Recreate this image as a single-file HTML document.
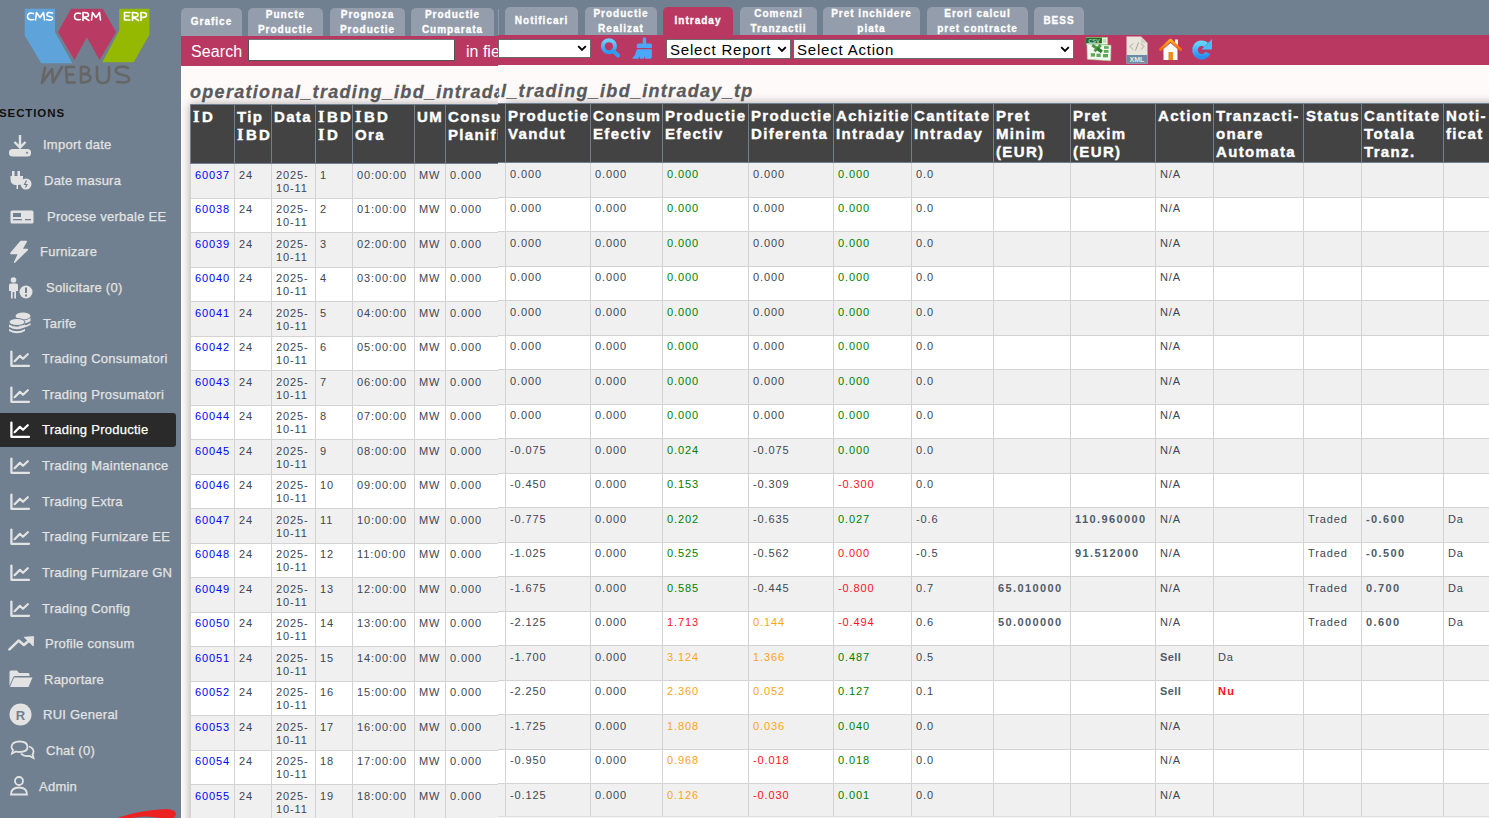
<!DOCTYPE html><html><head><meta charset="utf-8"><style>
*{box-sizing:border-box}
html,body{margin:0;padding:0}
body{width:1489px;height:818px;overflow:hidden;position:relative;background:#708090;font-family:"Liberation Sans",sans-serif}
.a{position:absolute}
.tab{position:absolute;top:7px;height:29px;background:#939dab;border-radius:5px 5px 0 0;color:#fff;font-weight:bold;font-size:10px;line-height:15px;text-align:center;display:flex;align-items:center;justify-content:center;letter-spacing:1px;padding-bottom:1px;-webkit-text-stroke:0.3px #fff}
.tab.act{background:#b93862}
.mi{position:absolute;left:0;width:176px;height:34px;color:#e3e3e3;font-size:13px;letter-spacing:0.55px}
.mi .t{position:absolute;top:0;line-height:34px;white-space:nowrap}
.mi svg{position:absolute}
.cell{position:absolute;font-size:11px;line-height:13px;color:#404652;letter-spacing:0.9px;white-space:nowrap}
.hd{position:absolute;font-size:15px;line-height:18.2px;color:#fff;font-weight:bold;white-space:nowrap;-webkit-text-stroke:0.4px #fff}
</style></head><body>
<div class="a" style="left:181px;top:64px;width:1308px;height:754px;background:#fffafa"></div>
<div class="tab" style="left:181px;width:61px;top:8px;height:28px">Grafice</div>
<div class="tab" style="left:248px;width:75px;top:8px;height:28px">Puncte<br>Productie</div>
<div class="tab" style="left:330px;width:75px;top:8px;height:28px">Prognoza<br>Productie</div>
<div class="tab" style="left:411px;width:83px;top:8px;height:28px">Productie<br>Cumparata</div>
<div class="tab" style="left:505px;width:73px;top:7px;height:28px">Notificari</div>
<div class="tab" style="left:585px;width:72px;top:7px;height:28px">Productie<br>Realizat</div>
<div class="tab act" style="left:663px;width:70px;top:7px;height:28px">Intraday</div>
<div class="tab" style="left:740px;width:77px;top:7px;height:28px">Comenzi<br>Tranzactii</div>
<div class="tab" style="left:823px;width:97px;top:7px;height:28px">Pret inchidere<br>piata</div>
<div class="tab" style="left:927px;width:101px;top:7px;height:28px">Erori calcul<br>pret contracte</div>
<div class="tab" style="left:1034px;width:50px;top:7px;height:28px">BESS</div>
<div class="a" style="left:498px;top:9px;width:1px;height:26px;background:#8e99a6"></div>
<div class="a" style="left:181px;top:36px;width:317px;height:30px;background:#b93862"></div>
<div class="a" style="left:498px;top:35px;width:991px;height:30px;background:#b93862"></div>
<div class="a" style="left:191px;top:43px;color:#fff;font-size:16px;letter-spacing:0.1px">Search</div>
<div class="a" style="left:248px;top:39px;width:207px;height:22px;background:#fff;border:1px solid #555;border-top-color:#777"></div>
<div class="a" style="left:466px;top:43px;color:#fff;font-size:16px;width:32px;overflow:hidden;white-space:nowrap">in fields</div>
<div class="a" style="left:498px;top:39px;width:93px;height:19px;background:#fff;border:1px solid #6a6a6a;overflow:hidden"><svg class="a" style="right:3px;top:5px" width="10" height="7" viewBox="0 0 10 7"><path d="M1.2 1.2 L5 5 L8.8 1.2" fill="none" stroke="#000" stroke-width="1.9"/></svg></div>
<div class="a" style="left:666px;top:39px;width:125px;height:20px;background:#fff;border:1px solid #6a6a6a;overflow:hidden"><div class="a" style="left:3px;top:0.5px;line-height:18px;font-size:15px;letter-spacing:0.8px;color:#000;white-space:nowrap">Select Report</div><svg class="a" style="right:3px;top:6px" width="10" height="7" viewBox="0 0 10 7"><path d="M1.2 1.2 L5 5 L8.8 1.2" fill="none" stroke="#000" stroke-width="1.9"/></svg></div>
<div class="a" style="left:793px;top:39px;width:281px;height:20px;background:#fff;border:1px solid #6a6a6a;overflow:hidden"><div class="a" style="left:3px;top:0.5px;line-height:18px;font-size:15px;letter-spacing:0.8px;color:#000;white-space:nowrap">Select Action</div><svg class="a" style="right:3px;top:6px" width="10" height="7" viewBox="0 0 10 7"><path d="M1.2 1.2 L5 5 L8.8 1.2" fill="none" stroke="#000" stroke-width="1.9"/></svg></div>
<svg class="a" style="left:0;top:0" width="180" height="100" viewBox="0 0 180 100">
<polygon points="24.7,8.8 55,8.8 55,32 72.3,63.3 41.2,63.3 24.7,35.5" fill="#5ea3d9"/>
<polygon points="71.1,8.8 102.7,8.8 116.1,32 99.5,60.1 86.8,37.3 74.4,60.1 58,32" fill="#b93a63"/>
<polygon points="119.2,8.8 149.4,8.8 149.4,34.8 133.7,62.3 102.3,62.3 119.2,30.6" fill="#95b800"/>
<g fill="none" stroke="#fff" stroke-width="1.6" stroke-linecap="round" stroke-linejoin="round">
<path d="M33.5 13.5 Q27.5 12 27.5 16.5 Q27.5 20.5 33.5 19.5"/>
<path d="M35.5 20 L36.5 12.5 L40 17.5 L43.5 12.5 L44.5 20"/>
<path d="M52.5 13 Q47 11.5 47 14.5 Q47 16.5 50 16.5 Q53 17 52.5 19 Q51.5 21 46.5 19.5"/>
<path d="M80.5 13.5 Q74.5 12 74.5 16.5 Q74.5 20.5 80.5 19.5"/>
<path d="M83 20.5 L83 12.5 Q89 12 88.5 15.5 Q88 17 83.5 17 L89 20.5"/>
<path d="M91.5 20 L92.5 12.5 L96 17.5 L99.5 12.5 L100.5 20"/>
<path d="M130 12.5 L124.5 12.5 L124.5 20 L130 20 M124.5 16 L129 16"/>
<path d="M132.5 20.5 L132.5 12.5 Q138.5 12 138 15.5 Q137.5 17 133 17 L138.5 20.5"/>
<path d="M141 20.5 L141 12.5 Q147 12 146.5 15.5 Q146 17.5 141.5 17.5"/>
</g>
<g fill="none" stroke="#666666" stroke-width="2.6" stroke-linecap="round" stroke-linejoin="round">
<path d="M42 83 L45 67.5 M42 83 L52 69 L53 82.5 L62 67"/>
<path d="M74 67 L66 67 L67 82.5 L75 82.5 M66.5 74.5 L73 74.5"/>
<path d="M81 67 L81 82.5 M81 67 Q89 66 89 70.5 Q89 74 82 74 Q91 74 90.5 78.5 Q90 82.5 81 82.5"/>
<path d="M97 67 L97 77 Q97 83 103 83 Q109 83 109 77 L109 67"/>
<path d="M128 68 Q124 66 119 67 Q115 68.5 116 71.5 Q117 74 123 75 Q130 76.5 129 80 Q128 83.5 117 82"/>
</g>
</svg>
<div class="a" style="left:-1px;top:107px;font-size:11.5px;font-weight:bold;color:#111;letter-spacing:0.9px">SECTIONS</div>
<div class="a" style="left:0;top:144px;width:0;height:0"><svg class="a" style="left:8px;top:-10px" width="24" height="24" viewBox="0 0 24 24"><path d="M12 1 L12 13 M6.5 8 L12 13.5 L17.5 8" fill="none" stroke="#e3e3e3" stroke-width="2.4"/><rect x="1" y="15" width="22" height="7.5" rx="3.5" fill="#e3e3e3"/><circle cx="19" cy="18.7" r="1" fill="#708090"/></svg></div>
<div class="a" style="left:43px;top:137px;font-size:13px;line-height:16px;color:#e3e3e3;letter-spacing:0.25px;white-space:nowrap;-webkit-text-stroke:0.25px #e3e3e3">Import date</div>
<div class="a" style="left:0;top:180px;width:0;height:0"><svg class="a" style="left:10px;top:-9px" width="22" height="20" viewBox="0 0 22 20"><rect x="2" y="0" width="2.5" height="5" fill="#e3e3e3"/><rect x="7.5" y="0" width="2.5" height="5" fill="#e3e3e3"/><path d="M0.5 5 H13 V8 Q13 14 8 14 V18 H6.5 V14 Q0.5 14 0.5 8 Z" fill="#e3e3e3"/><circle cx="16" cy="13" r="5.5" fill="#e3e3e3"/><path d="M16.5 9.5 L14.5 13.5 H17 L15.5 16.5" fill="none" stroke="#708090" stroke-width="1.2"/></svg></div>
<div class="a" style="left:44px;top:173px;font-size:13px;line-height:16px;color:#e3e3e3;letter-spacing:0.25px;white-space:nowrap;-webkit-text-stroke:0.25px #e3e3e3">Date masura</div>
<div class="a" style="left:0;top:216px;width:0;height:0"><svg class="a" style="left:10px;top:-6px" width="24" height="14" viewBox="0 0 24 14"><rect x="0.5" y="0.5" width="23" height="13" rx="1.5" fill="#e3e3e3"/><rect x="3" y="3" width="8" height="4" fill="#708090"/><rect x="3" y="9" width="9" height="1.3" fill="#708090"/><rect x="15" y="9" width="6" height="1.3" fill="#708090"/></svg></div>
<div class="a" style="left:47px;top:209px;font-size:13px;line-height:16px;color:#e3e3e3;letter-spacing:0.25px;white-space:nowrap;-webkit-text-stroke:0.25px #e3e3e3">Procese verbale EE</div>
<div class="a" style="left:0;top:251px;width:0;height:0"><svg class="a" style="left:9px;top:-11px" width="20" height="24" viewBox="0 0 20 24"><path d="M11.5 0.8 L17.5 0.8 Q18.3 1 17.8 2 L14 8.8 L18.3 8.8 Q19.6 9.2 18.6 10.4 L6 22.8 Q4.6 23.6 5 22 L8.6 14.2 L2 14.2 Q0.6 13.8 1.5 12.6 Z" fill="#e3e3e3"/></svg></div>
<div class="a" style="left:40px;top:244px;font-size:13px;line-height:16px;color:#e3e3e3;letter-spacing:0.25px;white-space:nowrap;-webkit-text-stroke:0.25px #e3e3e3">Furnizare</div>
<div class="a" style="left:0;top:287px;width:0;height:0"><svg class="a" style="left:8px;top:-10px" width="26" height="22" viewBox="0 0 26 22"><circle cx="5.5" cy="3" r="2.8" fill="#e3e3e3"/><path d="M1 8 Q1 6.5 3 6.5 H8 Q10 6.5 10 8 V14 H8 V21.5 H6.3 V15 H4.7 V21.5 H3 V14 H1 Z" fill="#e3e3e3"/><circle cx="18" cy="15" r="6.5" fill="#e3e3e3"/><rect x="17" y="10.5" width="2" height="5.5" fill="#708090"/><rect x="17" y="17.5" width="2" height="2" fill="#708090"/></svg></div>
<div class="a" style="left:46px;top:280px;font-size:13px;line-height:16px;color:#e3e3e3;letter-spacing:0.25px;white-space:nowrap;-webkit-text-stroke:0.25px #e3e3e3">Solicitare (0)</div>
<div class="a" style="left:0;top:323px;width:0;height:0"><svg class="a" style="left:8px;top:-11px" width="24" height="23" viewBox="0 0 24 23"><ellipse cx="15" cy="4" rx="7.5" ry="3.5" fill="#e3e3e3"/><path d="M7.5 6 Q15 11 22.5 6 V9 Q15 14 7.5 9Z M7.5 11 Q15 16 22.5 11 V13 Q15 17 12 15Z" fill="#e3e3e3"/><ellipse cx="9" cy="10" rx="8" ry="3.5" fill="#e3e3e3" stroke="#708090" stroke-width="1"/><path d="M1 12.5 Q9 17 17 12.5 V15 Q9 19.5 1 15Z M1 17 Q9 21.5 17 17 V19 Q9 23.5 1 19Z" fill="#e3e3e3"/></svg></div>
<div class="a" style="left:43px;top:316px;font-size:13px;line-height:16px;color:#e3e3e3;letter-spacing:0.25px;white-space:nowrap;-webkit-text-stroke:0.25px #e3e3e3">Tarife</div>
<div class="a" style="left:0;top:358px;width:0;height:0"><svg class="a" style="left:10px;top:-8px" width="21" height="18" viewBox="0 0 21 18"><path d="M1.4 1.6 V15.8 H19" fill="none" stroke="#e3e3e3" stroke-width="2.3" stroke-linecap="round" stroke-linejoin="round"/><path d="M4.6 11.2 L9.9 5.9 L13 8.8 L17.8 4.2" fill="none" stroke="#e3e3e3" stroke-width="2.2" stroke-linecap="round" stroke-linejoin="round"/></svg></div>
<div class="a" style="left:42px;top:351px;font-size:13px;line-height:16px;color:#e3e3e3;letter-spacing:0.25px;white-space:nowrap;-webkit-text-stroke:0.25px #e3e3e3">Trading Consumatori</div>
<div class="a" style="left:0;top:394px;width:0;height:0"><svg class="a" style="left:10px;top:-8px" width="21" height="18" viewBox="0 0 21 18"><path d="M1.4 1.6 V15.8 H19" fill="none" stroke="#e3e3e3" stroke-width="2.3" stroke-linecap="round" stroke-linejoin="round"/><path d="M4.6 11.2 L9.9 5.9 L13 8.8 L17.8 4.2" fill="none" stroke="#e3e3e3" stroke-width="2.2" stroke-linecap="round" stroke-linejoin="round"/></svg></div>
<div class="a" style="left:42px;top:387px;font-size:13px;line-height:16px;color:#e3e3e3;letter-spacing:0.25px;white-space:nowrap;-webkit-text-stroke:0.25px #e3e3e3">Trading Prosumatori</div>
<div class="a" style="left:0;top:413px;width:176px;height:34px;background:#2a2a2a;border-radius:0 3px 3px 0"></div>
<div class="a" style="left:0;top:429px;width:0;height:0"><svg class="a" style="left:10px;top:-8px" width="21" height="18" viewBox="0 0 21 18"><path d="M1.4 1.6 V15.8 H19" fill="none" stroke="#ffffff" stroke-width="2.3" stroke-linecap="round" stroke-linejoin="round"/><path d="M4.6 11.2 L9.9 5.9 L13 8.8 L17.8 4.2" fill="none" stroke="#ffffff" stroke-width="2.2" stroke-linecap="round" stroke-linejoin="round"/></svg></div>
<div class="a" style="left:42px;top:422px;font-size:13px;line-height:16px;color:#ffffff;letter-spacing:0.25px;white-space:nowrap;-webkit-text-stroke:0.25px #ffffff">Trading Productie</div>
<div class="a" style="left:0;top:465px;width:0;height:0"><svg class="a" style="left:10px;top:-8px" width="21" height="18" viewBox="0 0 21 18"><path d="M1.4 1.6 V15.8 H19" fill="none" stroke="#e3e3e3" stroke-width="2.3" stroke-linecap="round" stroke-linejoin="round"/><path d="M4.6 11.2 L9.9 5.9 L13 8.8 L17.8 4.2" fill="none" stroke="#e3e3e3" stroke-width="2.2" stroke-linecap="round" stroke-linejoin="round"/></svg></div>
<div class="a" style="left:42px;top:458px;font-size:13px;line-height:16px;color:#e3e3e3;letter-spacing:0.25px;white-space:nowrap;-webkit-text-stroke:0.25px #e3e3e3">Trading Maintenance</div>
<div class="a" style="left:0;top:501px;width:0;height:0"><svg class="a" style="left:10px;top:-8px" width="21" height="18" viewBox="0 0 21 18"><path d="M1.4 1.6 V15.8 H19" fill="none" stroke="#e3e3e3" stroke-width="2.3" stroke-linecap="round" stroke-linejoin="round"/><path d="M4.6 11.2 L9.9 5.9 L13 8.8 L17.8 4.2" fill="none" stroke="#e3e3e3" stroke-width="2.2" stroke-linecap="round" stroke-linejoin="round"/></svg></div>
<div class="a" style="left:42px;top:494px;font-size:13px;line-height:16px;color:#e3e3e3;letter-spacing:0.25px;white-space:nowrap;-webkit-text-stroke:0.25px #e3e3e3">Trading Extra</div>
<div class="a" style="left:0;top:536px;width:0;height:0"><svg class="a" style="left:10px;top:-8px" width="21" height="18" viewBox="0 0 21 18"><path d="M1.4 1.6 V15.8 H19" fill="none" stroke="#e3e3e3" stroke-width="2.3" stroke-linecap="round" stroke-linejoin="round"/><path d="M4.6 11.2 L9.9 5.9 L13 8.8 L17.8 4.2" fill="none" stroke="#e3e3e3" stroke-width="2.2" stroke-linecap="round" stroke-linejoin="round"/></svg></div>
<div class="a" style="left:42px;top:529px;font-size:13px;line-height:16px;color:#e3e3e3;letter-spacing:0.25px;white-space:nowrap;-webkit-text-stroke:0.25px #e3e3e3">Trading Furnizare EE</div>
<div class="a" style="left:0;top:572px;width:0;height:0"><svg class="a" style="left:10px;top:-8px" width="21" height="18" viewBox="0 0 21 18"><path d="M1.4 1.6 V15.8 H19" fill="none" stroke="#e3e3e3" stroke-width="2.3" stroke-linecap="round" stroke-linejoin="round"/><path d="M4.6 11.2 L9.9 5.9 L13 8.8 L17.8 4.2" fill="none" stroke="#e3e3e3" stroke-width="2.2" stroke-linecap="round" stroke-linejoin="round"/></svg></div>
<div class="a" style="left:42px;top:565px;font-size:13px;line-height:16px;color:#e3e3e3;letter-spacing:0.25px;white-space:nowrap;-webkit-text-stroke:0.25px #e3e3e3">Trading Furnizare GN</div>
<div class="a" style="left:0;top:608px;width:0;height:0"><svg class="a" style="left:10px;top:-8px" width="21" height="18" viewBox="0 0 21 18"><path d="M1.4 1.6 V15.8 H19" fill="none" stroke="#e3e3e3" stroke-width="2.3" stroke-linecap="round" stroke-linejoin="round"/><path d="M4.6 11.2 L9.9 5.9 L13 8.8 L17.8 4.2" fill="none" stroke="#e3e3e3" stroke-width="2.2" stroke-linecap="round" stroke-linejoin="round"/></svg></div>
<div class="a" style="left:42px;top:601px;font-size:13px;line-height:16px;color:#e3e3e3;letter-spacing:0.25px;white-space:nowrap;-webkit-text-stroke:0.25px #e3e3e3">Trading Config</div>
<div class="a" style="left:0;top:643px;width:0;height:0"><svg class="a" style="left:8px;top:-7px" width="27" height="16" viewBox="0 0 27 16"><path d="M1.5 13.4 L10.6 4.6 L15.9 9 L22.5 3.2" fill="none" stroke="#e3e3e3" stroke-width="2.6" stroke-linecap="round" stroke-linejoin="round"/><path d="M16.2 1.2 L25.7 0.6 L25.3 10 Z" fill="#e3e3e3" stroke="#e3e3e3" stroke-width="0.8" stroke-linejoin="round"/></svg></div>
<div class="a" style="left:45px;top:636px;font-size:13px;line-height:16px;color:#e3e3e3;letter-spacing:0.25px;white-space:nowrap;-webkit-text-stroke:0.25px #e3e3e3">Profile consum</div>
<div class="a" style="left:0;top:679px;width:0;height:0"><svg class="a" style="left:9px;top:-9px" width="24" height="18" viewBox="0 0 24 18"><path d="M0.5 2 Q0.5 0.5 2 0.5 H8 L10 3 H19 Q20.5 3 20.5 4.5 V6 H6 Q4.5 6 4 7.5 L0.5 16Z" fill="#e3e3e3"/><path d="M5 7.5 H23.5 L19.5 17 H1Z" fill="#e3e3e3"/></svg></div>
<div class="a" style="left:44px;top:672px;font-size:13px;line-height:16px;color:#e3e3e3;letter-spacing:0.25px;white-space:nowrap;-webkit-text-stroke:0.25px #e3e3e3">Raportare</div>
<div class="a" style="left:0;top:714px;width:0;height:0"><svg class="a" style="left:9px;top:-11px" width="23" height="23" viewBox="0 0 23 23"><circle cx="11.5" cy="11.5" r="11" fill="#e3e3e3"/><text x="11.5" y="16.5" font-family="Liberation Sans" font-weight="bold" font-size="13" text-anchor="middle" fill="#708090">R</text></svg></div>
<div class="a" style="left:43px;top:707px;font-size:13px;line-height:16px;color:#e3e3e3;letter-spacing:0.25px;white-space:nowrap;-webkit-text-stroke:0.25px #e3e3e3">RUI General</div>
<div class="a" style="left:0;top:750px;width:0;height:0"><svg class="a" style="left:10px;top:-10px" width="25" height="21" viewBox="0 0 25 21"><path d="M9.5 1.5 Q17.5 1.5 17.5 7 Q17.5 12 9.5 12 Q7.5 12 6 11.5 L2 13.5 L3 10 Q1.5 8.5 1.5 7 Q1.5 1.5 9.5 1.5Z" fill="none" stroke="#e3e3e3" stroke-width="1.8"/><path d="M19 6.5 Q23.5 8 23.5 11.5 Q23.5 13.5 22.5 14.5 L23.5 18 L19.5 16 Q14 17 11 13.5" fill="none" stroke="#e3e3e3" stroke-width="1.8"/></svg></div>
<div class="a" style="left:46px;top:743px;font-size:13px;line-height:16px;color:#e3e3e3;letter-spacing:0.25px;white-space:nowrap;-webkit-text-stroke:0.25px #e3e3e3">Chat (0)</div>
<div class="a" style="left:0;top:786px;width:0;height:0"><svg class="a" style="left:10px;top:-10px" width="18" height="20" viewBox="0 0 18 20"><circle cx="9" cy="5" r="4" fill="none" stroke="#e3e3e3" stroke-width="1.8"/><path d="M1 18.5 Q1 11.5 9 11.5 Q17 11.5 17 18.5Z" fill="none" stroke="#e3e3e3" stroke-width="1.8"/></svg></div>
<div class="a" style="left:39px;top:779px;font-size:13px;line-height:16px;color:#e3e3e3;letter-spacing:0.25px;white-space:nowrap;-webkit-text-stroke:0.25px #e3e3e3">Admin</div>
<svg class="a" style="left:0;top:800px" width="181" height="18" viewBox="0 800 181 18"><path d="M117 818 Q140 810 166 809 Q176 809.5 176 814 Q175.5 818 172 818 L160 818 Q145 815 131 818 Z" fill="#ec2222"/></svg>
<svg class="a" style="left:596px;top:33px" width="26" height="28" viewBox="0 0 26 28">
<defs><linearGradient id="gS" x1="0" y1="0" x2="0" y2="1"><stop offset="0" stop-color="#6cd0ff"/><stop offset="1" stop-color="#2a9af0"/></linearGradient></defs>
<circle cx="12.9" cy="13.3" r="6.1" fill="none" stroke="url(#gS)" stroke-width="3.9"/>
<path d="M17.6 18.2 L22 22.6" stroke="#2f9cf0" stroke-width="4.2" stroke-linecap="round"/></svg>
<svg class="a" style="left:631px;top:36px" width="24" height="24" viewBox="0 0 24 24">
<path d="M11.7 8 L11.7 3 Q11.7 1.2 13.4 1.2 Q15.1 1.2 15.1 3 L15.1 8Z" fill="#4aa8fb"/>
<path d="M5.8 12.1 L5.8 9 Q5.8 7.5 7.3 7.5 L19.4 7.5 Q20.9 7.5 20.9 9 L20.9 12.1Z" fill="#4aa8fb"/>
<path d="M6 13.3 L20.9 13.3 L20.9 21 Q20.9 22.8 19 22.8 L14.2 22.8 L13.4 20 L12.7 22.8 L9.2 22.8 L8.4 20.3 L7.4 22.8 L1.1 22.8 Q4.6 19.2 6 13.3Z" fill="#4aa8fb"/></svg>
<svg class="a" style="left:1085px;top:36px" width="28" height="27" viewBox="0 0 28 27">
<rect x="1.3" y="1.4" width="21.4" height="7" fill="#eef7e8" stroke="#8ad274" stroke-width="0.7"/>
<rect x="17.5" y="3" width="3.8" height="3.8" fill="#c8d8c0"/>
<rect x="1.1" y="1.7" width="15.8" height="5.6" fill="#1f6a22"/>
<text x="9" y="6.6" font-family="Liberation Sans" font-size="5.6" font-weight="bold" fill="#b8d0b0" text-anchor="middle">CSV</text>
<polygon points="2,8 26,9.3 25.6,24.8 2.4,23.3" fill="#f3f8ee" stroke="#a8d898" stroke-width="0.6"/>
<path d="M7.2 9 L16.8 15.8 M15.8 9 L9.5 15.2" stroke="#4a9a44" stroke-width="3"/>
<path d="M12 12.2 L16.8 15.8" stroke="#2e7a2e" stroke-width="3"/>
<g fill="#5fa85a"><rect x="19" y="10.2" width="4.7" height="2.6"/><rect x="18.8" y="14" width="4.7" height="2.8"/><rect x="5.8" y="17.2" width="4.2" height="3.4"/><rect x="11.5" y="17.6" width="4.2" height="3.4"/><rect x="18" y="18" width="5" height="3.4"/></g></svg>
<svg class="a" style="left:1126px;top:36px" width="22" height="28" viewBox="0 0 22 28">
<path d="M0.5 0.5 L15 0.5 L21.5 7 L21.5 27.5 L0.5 27.5Z" fill="#e8e6dc"/>
<path d="M15 0.5 L15 7 L21.5 7Z" fill="#d5d2c6"/>
<rect x="0.5" y="19" width="21" height="8.5" fill="#6a8ca8"/>
<text x="11" y="26" font-family="Liberation Sans" font-size="7" font-weight="bold" fill="#f0e6d8" text-anchor="middle">XML</text>
<path d="M7 7.5 L4 10.5 L7 13.5 M15 7.5 L18 10.5 L15 13.5 M12.5 6.5 L9.5 14.5" fill="none" stroke="#a89a88" stroke-width="0.9"/></svg>
<svg class="a" style="left:1159px;top:38px" width="23" height="23" viewBox="0 0 23 23">
<defs><linearGradient id="gH" x1="0" y1="0" x2="0" y2="1"><stop offset="0" stop-color="#ffb020"/><stop offset="1" stop-color="#f06a10"/></linearGradient></defs>
<rect x="16" y="1.5" width="3" height="7" fill="#f4f4f4"/>
<path d="M4.5 11 L11.5 5 L18.5 11 L18.5 22 L4.5 22Z" fill="#fbfbfb"/>
<path d="M1.5 11.5 L11.5 2 L21.5 11.5" fill="none" stroke="url(#gH)" stroke-width="3" stroke-linejoin="round" stroke-linecap="round"/>
<rect x="9.5" y="14" width="4.5" height="8" fill="#f7891e"/></svg>
<svg class="a" style="left:1191px;top:38px" width="22" height="23" viewBox="0 0 22 23">
<defs><linearGradient id="gR" x1="0" y1="0" x2="0" y2="1"><stop offset="0" stop-color="#62d4ff"/><stop offset="1" stop-color="#2a8ef0"/></linearGradient></defs>
<path d="M16.9 14.9 A6.8 6.8 0 1 1 15.1 6.8" fill="none" stroke="url(#gR)" stroke-width="5.6"/>
<path d="M10.5 11.6 L21 1 L21 11.6Z" fill="#45bdfa"/></svg>
<div class="a" style="left:181px;top:66px;width:317px;height:38px;overflow:hidden"><div class="a" id="titL" style="left:9px;top:15px;font-size:18px;line-height:22px;font-weight:bold;font-style:italic;color:#5b5b5b;letter-spacing:1.3px;white-space:nowrap;-webkit-text-stroke:0.3px #5b5b5b">operational_trading_ibd_intraday_tp</div></div>
<div class="a" style="left:498px;top:65px;width:400px;height:38px;overflow:hidden"><div class="a" id="titR" style="left:-102px;top:15px;font-size:18px;line-height:22px;font-weight:bold;font-style:italic;color:#5b5b5b;letter-spacing:1.3px;white-space:nowrap;-webkit-text-stroke:0.3px #5b5b5b">operational_trading_ibd_intraday_tp</div></div>
<div class="a" style="left:181px;top:88px;width:317px;height:730px;overflow:hidden"><div class="a" style="left:9px;top:16px;width:1689px;height:900px;box-shadow:0 0 9px rgba(0,0,0,0.32)"></div><div class="a" style="left:9px;top:16px;width:1689px;height:60px;background:#434343;border-top:1px solid #708090;border-bottom:1px solid #708090"></div><div class="a" style="left:9px;top:76px;width:1689px;height:34px;background:#f0f0f0"></div><div class="a" style="left:9px;top:110px;width:1689px;height:1px;background:#d3d3d3"></div><div class="a" style="left:9px;top:111px;width:1689px;height:33px;background:#ffffff"></div><div class="a" style="left:9px;top:144px;width:1689px;height:1px;background:#d3d3d3"></div><div class="a" style="left:9px;top:145px;width:1689px;height:34px;background:#f0f0f0"></div><div class="a" style="left:9px;top:179px;width:1689px;height:1px;background:#d3d3d3"></div><div class="a" style="left:9px;top:180px;width:1689px;height:33px;background:#ffffff"></div><div class="a" style="left:9px;top:213px;width:1689px;height:1px;background:#d3d3d3"></div><div class="a" style="left:9px;top:214px;width:1689px;height:34px;background:#f0f0f0"></div><div class="a" style="left:9px;top:248px;width:1689px;height:1px;background:#d3d3d3"></div><div class="a" style="left:9px;top:249px;width:1689px;height:33px;background:#ffffff"></div><div class="a" style="left:9px;top:282px;width:1689px;height:1px;background:#d3d3d3"></div><div class="a" style="left:9px;top:283px;width:1689px;height:34px;background:#f0f0f0"></div><div class="a" style="left:9px;top:317px;width:1689px;height:1px;background:#d3d3d3"></div><div class="a" style="left:9px;top:318px;width:1689px;height:33px;background:#ffffff"></div><div class="a" style="left:9px;top:351px;width:1689px;height:1px;background:#d3d3d3"></div><div class="a" style="left:9px;top:352px;width:1689px;height:34px;background:#f0f0f0"></div><div class="a" style="left:9px;top:386px;width:1689px;height:1px;background:#d3d3d3"></div><div class="a" style="left:9px;top:387px;width:1689px;height:33px;background:#ffffff"></div><div class="a" style="left:9px;top:420px;width:1689px;height:1px;background:#d3d3d3"></div><div class="a" style="left:9px;top:421px;width:1689px;height:34px;background:#f0f0f0"></div><div class="a" style="left:9px;top:455px;width:1689px;height:1px;background:#d3d3d3"></div><div class="a" style="left:9px;top:456px;width:1689px;height:33px;background:#ffffff"></div><div class="a" style="left:9px;top:489px;width:1689px;height:1px;background:#d3d3d3"></div><div class="a" style="left:9px;top:490px;width:1689px;height:34px;background:#f0f0f0"></div><div class="a" style="left:9px;top:524px;width:1689px;height:1px;background:#d3d3d3"></div><div class="a" style="left:9px;top:525px;width:1689px;height:33px;background:#ffffff"></div><div class="a" style="left:9px;top:558px;width:1689px;height:1px;background:#d3d3d3"></div><div class="a" style="left:9px;top:559px;width:1689px;height:34px;background:#f0f0f0"></div><div class="a" style="left:9px;top:593px;width:1689px;height:1px;background:#d3d3d3"></div><div class="a" style="left:9px;top:594px;width:1689px;height:33px;background:#ffffff"></div><div class="a" style="left:9px;top:627px;width:1689px;height:1px;background:#d3d3d3"></div><div class="a" style="left:9px;top:628px;width:1689px;height:34px;background:#f0f0f0"></div><div class="a" style="left:9px;top:662px;width:1689px;height:1px;background:#d3d3d3"></div><div class="a" style="left:9px;top:663px;width:1689px;height:33px;background:#ffffff"></div><div class="a" style="left:9px;top:696px;width:1689px;height:1px;background:#d3d3d3"></div><div class="a" style="left:9px;top:697px;width:1689px;height:34px;background:#f0f0f0"></div><div class="a" style="left:9px;top:731px;width:1689px;height:1px;background:#d3d3d3"></div><div class="a" style="left:9px;top:16px;width:1px;height:60px;background:#708090"></div><div class="a" style="left:9px;top:76px;width:1px;height:818px;background:#d3d3d3"></div><div class="a" style="left:53px;top:16px;width:1px;height:60px;background:#708090"></div><div class="a" style="left:53px;top:76px;width:1px;height:818px;background:#d3d3d3"></div><div class="a" style="left:90px;top:16px;width:1px;height:60px;background:#708090"></div><div class="a" style="left:90px;top:76px;width:1px;height:818px;background:#d3d3d3"></div><div class="a" style="left:134px;top:16px;width:1px;height:60px;background:#708090"></div><div class="a" style="left:134px;top:76px;width:1px;height:818px;background:#d3d3d3"></div><div class="a" style="left:171px;top:16px;width:1px;height:60px;background:#708090"></div><div class="a" style="left:171px;top:76px;width:1px;height:818px;background:#d3d3d3"></div><div class="a" style="left:233px;top:16px;width:1px;height:60px;background:#708090"></div><div class="a" style="left:233px;top:76px;width:1px;height:818px;background:#d3d3d3"></div><div class="a" style="left:264px;top:16px;width:1px;height:60px;background:#708090"></div><div class="a" style="left:264px;top:76px;width:1px;height:818px;background:#d3d3d3"></div><div class="a" style="left:379px;top:16px;width:1px;height:60px;background:#708090"></div><div class="a" style="left:379px;top:76px;width:1px;height:818px;background:#d3d3d3"></div><div class="hd" style="left:12px;top:19.6px;font-family:'Liberation Sans',sans-serif;letter-spacing:1.35px;font-size:15px"><span style="font-family:'Liberation Serif',serif;font-size:16.5px;letter-spacing:2.6px">I</span>D</div><div class="hd" style="left:56px;top:19.6px;font-family:'Liberation Sans',sans-serif;letter-spacing:1.35px;font-size:15px">Tip<br><span style="font-family:'Liberation Serif',serif;font-size:16.5px;letter-spacing:2.6px">I</span><span style="letter-spacing:2.2px">B</span>D</div><div class="hd" style="left:93px;top:19.6px;font-family:'Liberation Sans',sans-serif;letter-spacing:1.35px;font-size:15px">Data</div><div class="hd" style="left:137px;top:19.6px;font-family:'Liberation Sans',sans-serif;letter-spacing:1.35px;font-size:15px"><span style="font-family:'Liberation Serif',serif;font-size:16.5px;letter-spacing:2.6px">I</span><span style="letter-spacing:2.2px">B</span>D<br><span style="font-family:'Liberation Serif',serif;font-size:16.5px;letter-spacing:2.6px">I</span>D</div><div class="hd" style="left:174px;top:19.6px;font-family:'Liberation Sans',sans-serif;letter-spacing:1.35px;font-size:15px"><span style="font-family:'Liberation Serif',serif;font-size:16.5px;letter-spacing:2.6px">I</span><span style="letter-spacing:2.2px">B</span>D<br>Ora</div><div class="hd" style="left:236px;top:19.6px;font-family:'Liberation Sans',sans-serif;letter-spacing:1.35px;font-size:15px">UM</div><div class="hd" style="left:267px;top:19.6px;font-family:'Liberation Sans',sans-serif;letter-spacing:1.35px;font-size:15px">Consum<br>Planificat</div><div class="cell" style="left:14px;top:81.0px;color:#0000ff;">60037</div><div class="cell" style="left:58px;top:81.0px;color:#404652;">24</div><div class="cell" style="left:95px;top:81.0px;color:#404652;">2025-<br>10-11</div><div class="cell" style="left:139px;top:81.0px;color:#404652;">1</div><div class="cell" style="left:176px;top:81.0px;color:#404652;">00:00:00</div><div class="cell" style="left:238px;top:81.0px;color:#404652;">MW</div><div class="cell" style="left:269px;top:81.0px;color:#404652;">0.000</div><div class="cell" style="left:14px;top:115.0px;color:#0000ff;">60038</div><div class="cell" style="left:58px;top:115.0px;color:#404652;">24</div><div class="cell" style="left:95px;top:115.0px;color:#404652;">2025-<br>10-11</div><div class="cell" style="left:139px;top:115.0px;color:#404652;">2</div><div class="cell" style="left:176px;top:115.0px;color:#404652;">01:00:00</div><div class="cell" style="left:238px;top:115.0px;color:#404652;">MW</div><div class="cell" style="left:269px;top:115.0px;color:#404652;">0.000</div><div class="cell" style="left:14px;top:150.0px;color:#0000ff;">60039</div><div class="cell" style="left:58px;top:150.0px;color:#404652;">24</div><div class="cell" style="left:95px;top:150.0px;color:#404652;">2025-<br>10-11</div><div class="cell" style="left:139px;top:150.0px;color:#404652;">3</div><div class="cell" style="left:176px;top:150.0px;color:#404652;">02:00:00</div><div class="cell" style="left:238px;top:150.0px;color:#404652;">MW</div><div class="cell" style="left:269px;top:150.0px;color:#404652;">0.000</div><div class="cell" style="left:14px;top:184.0px;color:#0000ff;">60040</div><div class="cell" style="left:58px;top:184.0px;color:#404652;">24</div><div class="cell" style="left:95px;top:184.0px;color:#404652;">2025-<br>10-11</div><div class="cell" style="left:139px;top:184.0px;color:#404652;">4</div><div class="cell" style="left:176px;top:184.0px;color:#404652;">03:00:00</div><div class="cell" style="left:238px;top:184.0px;color:#404652;">MW</div><div class="cell" style="left:269px;top:184.0px;color:#404652;">0.000</div><div class="cell" style="left:14px;top:219.0px;color:#0000ff;">60041</div><div class="cell" style="left:58px;top:219.0px;color:#404652;">24</div><div class="cell" style="left:95px;top:219.0px;color:#404652;">2025-<br>10-11</div><div class="cell" style="left:139px;top:219.0px;color:#404652;">5</div><div class="cell" style="left:176px;top:219.0px;color:#404652;">04:00:00</div><div class="cell" style="left:238px;top:219.0px;color:#404652;">MW</div><div class="cell" style="left:269px;top:219.0px;color:#404652;">0.000</div><div class="cell" style="left:14px;top:253.0px;color:#0000ff;">60042</div><div class="cell" style="left:58px;top:253.0px;color:#404652;">24</div><div class="cell" style="left:95px;top:253.0px;color:#404652;">2025-<br>10-11</div><div class="cell" style="left:139px;top:253.0px;color:#404652;">6</div><div class="cell" style="left:176px;top:253.0px;color:#404652;">05:00:00</div><div class="cell" style="left:238px;top:253.0px;color:#404652;">MW</div><div class="cell" style="left:269px;top:253.0px;color:#404652;">0.000</div><div class="cell" style="left:14px;top:288.0px;color:#0000ff;">60043</div><div class="cell" style="left:58px;top:288.0px;color:#404652;">24</div><div class="cell" style="left:95px;top:288.0px;color:#404652;">2025-<br>10-11</div><div class="cell" style="left:139px;top:288.0px;color:#404652;">7</div><div class="cell" style="left:176px;top:288.0px;color:#404652;">06:00:00</div><div class="cell" style="left:238px;top:288.0px;color:#404652;">MW</div><div class="cell" style="left:269px;top:288.0px;color:#404652;">0.000</div><div class="cell" style="left:14px;top:322.0px;color:#0000ff;">60044</div><div class="cell" style="left:58px;top:322.0px;color:#404652;">24</div><div class="cell" style="left:95px;top:322.0px;color:#404652;">2025-<br>10-11</div><div class="cell" style="left:139px;top:322.0px;color:#404652;">8</div><div class="cell" style="left:176px;top:322.0px;color:#404652;">07:00:00</div><div class="cell" style="left:238px;top:322.0px;color:#404652;">MW</div><div class="cell" style="left:269px;top:322.0px;color:#404652;">0.000</div><div class="cell" style="left:14px;top:357.0px;color:#0000ff;">60045</div><div class="cell" style="left:58px;top:357.0px;color:#404652;">24</div><div class="cell" style="left:95px;top:357.0px;color:#404652;">2025-<br>10-11</div><div class="cell" style="left:139px;top:357.0px;color:#404652;">9</div><div class="cell" style="left:176px;top:357.0px;color:#404652;">08:00:00</div><div class="cell" style="left:238px;top:357.0px;color:#404652;">MW</div><div class="cell" style="left:269px;top:357.0px;color:#404652;">0.000</div><div class="cell" style="left:14px;top:391.0px;color:#0000ff;">60046</div><div class="cell" style="left:58px;top:391.0px;color:#404652;">24</div><div class="cell" style="left:95px;top:391.0px;color:#404652;">2025-<br>10-11</div><div class="cell" style="left:139px;top:391.0px;color:#404652;">10</div><div class="cell" style="left:176px;top:391.0px;color:#404652;">09:00:00</div><div class="cell" style="left:238px;top:391.0px;color:#404652;">MW</div><div class="cell" style="left:269px;top:391.0px;color:#404652;">0.000</div><div class="cell" style="left:14px;top:426.0px;color:#0000ff;">60047</div><div class="cell" style="left:58px;top:426.0px;color:#404652;">24</div><div class="cell" style="left:95px;top:426.0px;color:#404652;">2025-<br>10-11</div><div class="cell" style="left:139px;top:426.0px;color:#404652;">11</div><div class="cell" style="left:176px;top:426.0px;color:#404652;">10:00:00</div><div class="cell" style="left:238px;top:426.0px;color:#404652;">MW</div><div class="cell" style="left:269px;top:426.0px;color:#404652;">0.000</div><div class="cell" style="left:14px;top:460.0px;color:#0000ff;">60048</div><div class="cell" style="left:58px;top:460.0px;color:#404652;">24</div><div class="cell" style="left:95px;top:460.0px;color:#404652;">2025-<br>10-11</div><div class="cell" style="left:139px;top:460.0px;color:#404652;">12</div><div class="cell" style="left:176px;top:460.0px;color:#404652;">11:00:00</div><div class="cell" style="left:238px;top:460.0px;color:#404652;">MW</div><div class="cell" style="left:269px;top:460.0px;color:#404652;">0.000</div><div class="cell" style="left:14px;top:495.0px;color:#0000ff;">60049</div><div class="cell" style="left:58px;top:495.0px;color:#404652;">24</div><div class="cell" style="left:95px;top:495.0px;color:#404652;">2025-<br>10-11</div><div class="cell" style="left:139px;top:495.0px;color:#404652;">13</div><div class="cell" style="left:176px;top:495.0px;color:#404652;">12:00:00</div><div class="cell" style="left:238px;top:495.0px;color:#404652;">MW</div><div class="cell" style="left:269px;top:495.0px;color:#404652;">0.000</div><div class="cell" style="left:14px;top:529.0px;color:#0000ff;">60050</div><div class="cell" style="left:58px;top:529.0px;color:#404652;">24</div><div class="cell" style="left:95px;top:529.0px;color:#404652;">2025-<br>10-11</div><div class="cell" style="left:139px;top:529.0px;color:#404652;">14</div><div class="cell" style="left:176px;top:529.0px;color:#404652;">13:00:00</div><div class="cell" style="left:238px;top:529.0px;color:#404652;">MW</div><div class="cell" style="left:269px;top:529.0px;color:#404652;">0.000</div><div class="cell" style="left:14px;top:564.0px;color:#0000ff;">60051</div><div class="cell" style="left:58px;top:564.0px;color:#404652;">24</div><div class="cell" style="left:95px;top:564.0px;color:#404652;">2025-<br>10-11</div><div class="cell" style="left:139px;top:564.0px;color:#404652;">15</div><div class="cell" style="left:176px;top:564.0px;color:#404652;">14:00:00</div><div class="cell" style="left:238px;top:564.0px;color:#404652;">MW</div><div class="cell" style="left:269px;top:564.0px;color:#404652;">0.000</div><div class="cell" style="left:14px;top:598.0px;color:#0000ff;">60052</div><div class="cell" style="left:58px;top:598.0px;color:#404652;">24</div><div class="cell" style="left:95px;top:598.0px;color:#404652;">2025-<br>10-11</div><div class="cell" style="left:139px;top:598.0px;color:#404652;">16</div><div class="cell" style="left:176px;top:598.0px;color:#404652;">15:00:00</div><div class="cell" style="left:238px;top:598.0px;color:#404652;">MW</div><div class="cell" style="left:269px;top:598.0px;color:#404652;">0.000</div><div class="cell" style="left:14px;top:633.0px;color:#0000ff;">60053</div><div class="cell" style="left:58px;top:633.0px;color:#404652;">24</div><div class="cell" style="left:95px;top:633.0px;color:#404652;">2025-<br>10-11</div><div class="cell" style="left:139px;top:633.0px;color:#404652;">17</div><div class="cell" style="left:176px;top:633.0px;color:#404652;">16:00:00</div><div class="cell" style="left:238px;top:633.0px;color:#404652;">MW</div><div class="cell" style="left:269px;top:633.0px;color:#404652;">0.000</div><div class="cell" style="left:14px;top:667.0px;color:#0000ff;">60054</div><div class="cell" style="left:58px;top:667.0px;color:#404652;">24</div><div class="cell" style="left:95px;top:667.0px;color:#404652;">2025-<br>10-11</div><div class="cell" style="left:139px;top:667.0px;color:#404652;">18</div><div class="cell" style="left:176px;top:667.0px;color:#404652;">17:00:00</div><div class="cell" style="left:238px;top:667.0px;color:#404652;">MW</div><div class="cell" style="left:269px;top:667.0px;color:#404652;">0.000</div><div class="cell" style="left:14px;top:702.0px;color:#0000ff;">60055</div><div class="cell" style="left:58px;top:702.0px;color:#404652;">24</div><div class="cell" style="left:95px;top:702.0px;color:#404652;">2025-<br>10-11</div><div class="cell" style="left:139px;top:702.0px;color:#404652;">19</div><div class="cell" style="left:176px;top:702.0px;color:#404652;">18:00:00</div><div class="cell" style="left:238px;top:702.0px;color:#404652;">MW</div><div class="cell" style="left:269px;top:702.0px;color:#404652;">0.000</div></div>
<div class="a" style="left:498px;top:87px;width:991px;height:731px;overflow:hidden"><div class="a" style="left:7px;top:16px;width:1689px;height:900px;box-shadow:0 0 9px rgba(0,0,0,0.32)"></div><div class="a" style="left:0px;top:16px;width:1689px;height:60px;background:#434343;border-top:1px solid #708090;border-bottom:1px solid #708090"></div><div class="a" style="left:0px;top:76px;width:1689px;height:34px;background:#f0f0f0"></div><div class="a" style="left:0px;top:110px;width:1689px;height:1px;background:#d3d3d3"></div><div class="a" style="left:0px;top:111px;width:1689px;height:33px;background:#ffffff"></div><div class="a" style="left:0px;top:144px;width:1689px;height:1px;background:#d3d3d3"></div><div class="a" style="left:0px;top:145px;width:1689px;height:34px;background:#f0f0f0"></div><div class="a" style="left:0px;top:179px;width:1689px;height:1px;background:#d3d3d3"></div><div class="a" style="left:0px;top:180px;width:1689px;height:33px;background:#ffffff"></div><div class="a" style="left:0px;top:213px;width:1689px;height:1px;background:#d3d3d3"></div><div class="a" style="left:0px;top:214px;width:1689px;height:34px;background:#f0f0f0"></div><div class="a" style="left:0px;top:248px;width:1689px;height:1px;background:#d3d3d3"></div><div class="a" style="left:0px;top:249px;width:1689px;height:33px;background:#ffffff"></div><div class="a" style="left:0px;top:282px;width:1689px;height:1px;background:#d3d3d3"></div><div class="a" style="left:0px;top:283px;width:1689px;height:34px;background:#f0f0f0"></div><div class="a" style="left:0px;top:317px;width:1689px;height:1px;background:#d3d3d3"></div><div class="a" style="left:0px;top:318px;width:1689px;height:33px;background:#ffffff"></div><div class="a" style="left:0px;top:351px;width:1689px;height:1px;background:#d3d3d3"></div><div class="a" style="left:0px;top:352px;width:1689px;height:34px;background:#f0f0f0"></div><div class="a" style="left:0px;top:386px;width:1689px;height:1px;background:#d3d3d3"></div><div class="a" style="left:0px;top:387px;width:1689px;height:33px;background:#ffffff"></div><div class="a" style="left:0px;top:420px;width:1689px;height:1px;background:#d3d3d3"></div><div class="a" style="left:0px;top:421px;width:1689px;height:34px;background:#f0f0f0"></div><div class="a" style="left:0px;top:455px;width:1689px;height:1px;background:#d3d3d3"></div><div class="a" style="left:0px;top:456px;width:1689px;height:33px;background:#ffffff"></div><div class="a" style="left:0px;top:489px;width:1689px;height:1px;background:#d3d3d3"></div><div class="a" style="left:0px;top:490px;width:1689px;height:34px;background:#f0f0f0"></div><div class="a" style="left:0px;top:524px;width:1689px;height:1px;background:#d3d3d3"></div><div class="a" style="left:0px;top:525px;width:1689px;height:33px;background:#ffffff"></div><div class="a" style="left:0px;top:558px;width:1689px;height:1px;background:#d3d3d3"></div><div class="a" style="left:0px;top:559px;width:1689px;height:34px;background:#f0f0f0"></div><div class="a" style="left:0px;top:593px;width:1689px;height:1px;background:#d3d3d3"></div><div class="a" style="left:0px;top:594px;width:1689px;height:33px;background:#ffffff"></div><div class="a" style="left:0px;top:627px;width:1689px;height:1px;background:#d3d3d3"></div><div class="a" style="left:0px;top:628px;width:1689px;height:34px;background:#f0f0f0"></div><div class="a" style="left:0px;top:662px;width:1689px;height:1px;background:#d3d3d3"></div><div class="a" style="left:0px;top:663px;width:1689px;height:33px;background:#ffffff"></div><div class="a" style="left:0px;top:696px;width:1689px;height:1px;background:#d3d3d3"></div><div class="a" style="left:0px;top:697px;width:1689px;height:34px;background:#f0f0f0"></div><div class="a" style="left:0px;top:731px;width:1689px;height:1px;background:#d3d3d3"></div><div class="a" style="left:7px;top:16px;width:1px;height:60px;background:#708090"></div><div class="a" style="left:7px;top:76px;width:1px;height:818px;background:#d3d3d3"></div><div class="a" style="left:92px;top:16px;width:1px;height:60px;background:#708090"></div><div class="a" style="left:92px;top:76px;width:1px;height:818px;background:#d3d3d3"></div><div class="a" style="left:164px;top:16px;width:1px;height:60px;background:#708090"></div><div class="a" style="left:164px;top:76px;width:1px;height:818px;background:#d3d3d3"></div><div class="a" style="left:250px;top:16px;width:1px;height:60px;background:#708090"></div><div class="a" style="left:250px;top:76px;width:1px;height:818px;background:#d3d3d3"></div><div class="a" style="left:335px;top:16px;width:1px;height:60px;background:#708090"></div><div class="a" style="left:335px;top:76px;width:1px;height:818px;background:#d3d3d3"></div><div class="a" style="left:413px;top:16px;width:1px;height:60px;background:#708090"></div><div class="a" style="left:413px;top:76px;width:1px;height:818px;background:#d3d3d3"></div><div class="a" style="left:495px;top:16px;width:1px;height:60px;background:#708090"></div><div class="a" style="left:495px;top:76px;width:1px;height:818px;background:#d3d3d3"></div><div class="a" style="left:572px;top:16px;width:1px;height:60px;background:#708090"></div><div class="a" style="left:572px;top:76px;width:1px;height:818px;background:#d3d3d3"></div><div class="a" style="left:657px;top:16px;width:1px;height:60px;background:#708090"></div><div class="a" style="left:657px;top:76px;width:1px;height:818px;background:#d3d3d3"></div><div class="a" style="left:715px;top:16px;width:1px;height:60px;background:#708090"></div><div class="a" style="left:715px;top:76px;width:1px;height:818px;background:#d3d3d3"></div><div class="a" style="left:805px;top:16px;width:1px;height:60px;background:#708090"></div><div class="a" style="left:805px;top:76px;width:1px;height:818px;background:#d3d3d3"></div><div class="a" style="left:863px;top:16px;width:1px;height:60px;background:#708090"></div><div class="a" style="left:863px;top:76px;width:1px;height:818px;background:#d3d3d3"></div><div class="a" style="left:945px;top:16px;width:1px;height:60px;background:#708090"></div><div class="a" style="left:945px;top:76px;width:1px;height:818px;background:#d3d3d3"></div><div class="a" style="left:1032px;top:16px;width:1px;height:60px;background:#708090"></div><div class="a" style="left:1032px;top:76px;width:1px;height:818px;background:#d3d3d3"></div><div class="hd" style="left:10px;top:19.6px;font-family:'Liberation Sans',sans-serif;letter-spacing:1.35px;font-size:15px">Productie<br>Vandut</div><div class="hd" style="left:95px;top:19.6px;font-family:'Liberation Sans',sans-serif;letter-spacing:1.35px;font-size:15px">Consum<br>Efectiv</div><div class="hd" style="left:167px;top:19.6px;font-family:'Liberation Sans',sans-serif;letter-spacing:1.35px;font-size:15px">Productie<br>Efectiv</div><div class="hd" style="left:253px;top:19.6px;font-family:'Liberation Sans',sans-serif;letter-spacing:1.35px;font-size:15px">Productie<br>Diferenta</div><div class="hd" style="left:338px;top:19.6px;font-family:'Liberation Sans',sans-serif;letter-spacing:1.35px;font-size:15px">Achizitie<br>Intraday</div><div class="hd" style="left:416px;top:19.6px;font-family:'Liberation Sans',sans-serif;letter-spacing:1.35px;font-size:15px">Cantitate<br>Intraday</div><div class="hd" style="left:498px;top:19.6px;font-family:'Liberation Sans',sans-serif;letter-spacing:1.35px;font-size:15px">Pret<br>Minim<br>(EUR)</div><div class="hd" style="left:575px;top:19.6px;font-family:'Liberation Sans',sans-serif;letter-spacing:1.35px;font-size:15px">Pret<br>Maxim<br>(EUR)</div><div class="hd" style="left:660px;top:19.6px;font-family:'Liberation Sans',sans-serif;letter-spacing:1.35px;font-size:15px">Action</div><div class="hd" style="left:718px;top:19.6px;font-family:'Liberation Sans',sans-serif;letter-spacing:1.35px;font-size:15px">Tranzacti-<br>onare<br>Automata</div><div class="hd" style="left:808px;top:19.6px;font-family:'Liberation Sans',sans-serif;letter-spacing:1.35px;font-size:15px">Status</div><div class="hd" style="left:866px;top:19.6px;font-family:'Liberation Sans',sans-serif;letter-spacing:1.35px;font-size:15px">Cantitate<br>Totala<br>Tranz.</div><div class="hd" style="left:948px;top:19.6px;font-family:'Liberation Sans',sans-serif;letter-spacing:1.35px;font-size:15px">Noti-<br>ficat</div><div class="cell" style="left:12px;top:81.0px;color:#404652;">0.000</div><div class="cell" style="left:97px;top:81.0px;color:#404652;">0.000</div><div class="cell" style="left:169px;top:81.0px;color:#008000;">0.000</div><div class="cell" style="left:255px;top:81.0px;color:#404652;">0.000</div><div class="cell" style="left:340px;top:81.0px;color:#008000;">0.000</div><div class="cell" style="left:418px;top:81.0px;color:#404652;">0.0</div><div class="cell" style="left:662px;top:81.0px;color:#404652;">N/A</div><div class="cell" style="left:12px;top:115.0px;color:#404652;">0.000</div><div class="cell" style="left:97px;top:115.0px;color:#404652;">0.000</div><div class="cell" style="left:169px;top:115.0px;color:#008000;">0.000</div><div class="cell" style="left:255px;top:115.0px;color:#404652;">0.000</div><div class="cell" style="left:340px;top:115.0px;color:#008000;">0.000</div><div class="cell" style="left:418px;top:115.0px;color:#404652;">0.0</div><div class="cell" style="left:662px;top:115.0px;color:#404652;">N/A</div><div class="cell" style="left:12px;top:150.0px;color:#404652;">0.000</div><div class="cell" style="left:97px;top:150.0px;color:#404652;">0.000</div><div class="cell" style="left:169px;top:150.0px;color:#008000;">0.000</div><div class="cell" style="left:255px;top:150.0px;color:#404652;">0.000</div><div class="cell" style="left:340px;top:150.0px;color:#008000;">0.000</div><div class="cell" style="left:418px;top:150.0px;color:#404652;">0.0</div><div class="cell" style="left:662px;top:150.0px;color:#404652;">N/A</div><div class="cell" style="left:12px;top:184.0px;color:#404652;">0.000</div><div class="cell" style="left:97px;top:184.0px;color:#404652;">0.000</div><div class="cell" style="left:169px;top:184.0px;color:#008000;">0.000</div><div class="cell" style="left:255px;top:184.0px;color:#404652;">0.000</div><div class="cell" style="left:340px;top:184.0px;color:#008000;">0.000</div><div class="cell" style="left:418px;top:184.0px;color:#404652;">0.0</div><div class="cell" style="left:662px;top:184.0px;color:#404652;">N/A</div><div class="cell" style="left:12px;top:219.0px;color:#404652;">0.000</div><div class="cell" style="left:97px;top:219.0px;color:#404652;">0.000</div><div class="cell" style="left:169px;top:219.0px;color:#008000;">0.000</div><div class="cell" style="left:255px;top:219.0px;color:#404652;">0.000</div><div class="cell" style="left:340px;top:219.0px;color:#008000;">0.000</div><div class="cell" style="left:418px;top:219.0px;color:#404652;">0.0</div><div class="cell" style="left:662px;top:219.0px;color:#404652;">N/A</div><div class="cell" style="left:12px;top:253.0px;color:#404652;">0.000</div><div class="cell" style="left:97px;top:253.0px;color:#404652;">0.000</div><div class="cell" style="left:169px;top:253.0px;color:#008000;">0.000</div><div class="cell" style="left:255px;top:253.0px;color:#404652;">0.000</div><div class="cell" style="left:340px;top:253.0px;color:#008000;">0.000</div><div class="cell" style="left:418px;top:253.0px;color:#404652;">0.0</div><div class="cell" style="left:662px;top:253.0px;color:#404652;">N/A</div><div class="cell" style="left:12px;top:288.0px;color:#404652;">0.000</div><div class="cell" style="left:97px;top:288.0px;color:#404652;">0.000</div><div class="cell" style="left:169px;top:288.0px;color:#008000;">0.000</div><div class="cell" style="left:255px;top:288.0px;color:#404652;">0.000</div><div class="cell" style="left:340px;top:288.0px;color:#008000;">0.000</div><div class="cell" style="left:418px;top:288.0px;color:#404652;">0.0</div><div class="cell" style="left:662px;top:288.0px;color:#404652;">N/A</div><div class="cell" style="left:12px;top:322.0px;color:#404652;">0.000</div><div class="cell" style="left:97px;top:322.0px;color:#404652;">0.000</div><div class="cell" style="left:169px;top:322.0px;color:#008000;">0.000</div><div class="cell" style="left:255px;top:322.0px;color:#404652;">0.000</div><div class="cell" style="left:340px;top:322.0px;color:#008000;">0.000</div><div class="cell" style="left:418px;top:322.0px;color:#404652;">0.0</div><div class="cell" style="left:662px;top:322.0px;color:#404652;">N/A</div><div class="cell" style="left:12px;top:357.0px;color:#404652;">-0.075</div><div class="cell" style="left:97px;top:357.0px;color:#404652;">0.000</div><div class="cell" style="left:169px;top:357.0px;color:#008000;">0.024</div><div class="cell" style="left:255px;top:357.0px;color:#404652;">-0.075</div><div class="cell" style="left:340px;top:357.0px;color:#008000;">0.000</div><div class="cell" style="left:418px;top:357.0px;color:#404652;">0.0</div><div class="cell" style="left:662px;top:357.0px;color:#404652;">N/A</div><div class="cell" style="left:12px;top:391.0px;color:#404652;">-0.450</div><div class="cell" style="left:97px;top:391.0px;color:#404652;">0.000</div><div class="cell" style="left:169px;top:391.0px;color:#008000;">0.153</div><div class="cell" style="left:255px;top:391.0px;color:#404652;">-0.309</div><div class="cell" style="left:340px;top:391.0px;color:#ff1020;">-0.300</div><div class="cell" style="left:418px;top:391.0px;color:#404652;">0.0</div><div class="cell" style="left:662px;top:391.0px;color:#404652;">N/A</div><div class="cell" style="left:12px;top:426.0px;color:#404652;">-0.775</div><div class="cell" style="left:97px;top:426.0px;color:#404652;">0.000</div><div class="cell" style="left:169px;top:426.0px;color:#008000;">0.202</div><div class="cell" style="left:255px;top:426.0px;color:#404652;">-0.635</div><div class="cell" style="left:340px;top:426.0px;color:#008000;">0.027</div><div class="cell" style="left:418px;top:426.0px;color:#404652;">-0.6</div><div class="cell" style="left:577px;top:426.0px;color:#4f5b6b;font-weight:bold;letter-spacing:1.4px;">110.960000</div><div class="cell" style="left:662px;top:426.0px;color:#404652;">N/A</div><div class="cell" style="left:810px;top:426.0px;color:#404652;">Traded</div><div class="cell" style="left:868px;top:426.0px;color:#4f5b6b;font-weight:bold;letter-spacing:1.4px;">-0.600</div><div class="cell" style="left:950px;top:426.0px;color:#404652;">Da</div><div class="cell" style="left:12px;top:460.0px;color:#404652;">-1.025</div><div class="cell" style="left:97px;top:460.0px;color:#404652;">0.000</div><div class="cell" style="left:169px;top:460.0px;color:#008000;">0.525</div><div class="cell" style="left:255px;top:460.0px;color:#404652;">-0.562</div><div class="cell" style="left:340px;top:460.0px;color:#ff1020;">0.000</div><div class="cell" style="left:418px;top:460.0px;color:#404652;">-0.5</div><div class="cell" style="left:577px;top:460.0px;color:#4f5b6b;font-weight:bold;letter-spacing:1.4px;">91.512000</div><div class="cell" style="left:662px;top:460.0px;color:#404652;">N/A</div><div class="cell" style="left:810px;top:460.0px;color:#404652;">Traded</div><div class="cell" style="left:868px;top:460.0px;color:#4f5b6b;font-weight:bold;letter-spacing:1.4px;">-0.500</div><div class="cell" style="left:950px;top:460.0px;color:#404652;">Da</div><div class="cell" style="left:12px;top:495.0px;color:#404652;">-1.675</div><div class="cell" style="left:97px;top:495.0px;color:#404652;">0.000</div><div class="cell" style="left:169px;top:495.0px;color:#008000;">0.585</div><div class="cell" style="left:255px;top:495.0px;color:#404652;">-0.445</div><div class="cell" style="left:340px;top:495.0px;color:#ff1020;">-0.800</div><div class="cell" style="left:418px;top:495.0px;color:#404652;">0.7</div><div class="cell" style="left:500px;top:495.0px;color:#4f5b6b;font-weight:bold;letter-spacing:1.4px;">65.010000</div><div class="cell" style="left:662px;top:495.0px;color:#404652;">N/A</div><div class="cell" style="left:810px;top:495.0px;color:#404652;">Traded</div><div class="cell" style="left:868px;top:495.0px;color:#4f5b6b;font-weight:bold;letter-spacing:1.4px;">0.700</div><div class="cell" style="left:950px;top:495.0px;color:#404652;">Da</div><div class="cell" style="left:12px;top:529.0px;color:#404652;">-2.125</div><div class="cell" style="left:97px;top:529.0px;color:#404652;">0.000</div><div class="cell" style="left:169px;top:529.0px;color:#ff1020;">1.713</div><div class="cell" style="left:255px;top:529.0px;color:#ffa418;">0.144</div><div class="cell" style="left:340px;top:529.0px;color:#ff1020;">-0.494</div><div class="cell" style="left:418px;top:529.0px;color:#404652;">0.6</div><div class="cell" style="left:500px;top:529.0px;color:#4f5b6b;font-weight:bold;letter-spacing:1.4px;">50.000000</div><div class="cell" style="left:662px;top:529.0px;color:#404652;">N/A</div><div class="cell" style="left:810px;top:529.0px;color:#404652;">Traded</div><div class="cell" style="left:868px;top:529.0px;color:#4f5b6b;font-weight:bold;letter-spacing:1.4px;">0.600</div><div class="cell" style="left:950px;top:529.0px;color:#404652;">Da</div><div class="cell" style="left:12px;top:564.0px;color:#404652;">-1.700</div><div class="cell" style="left:97px;top:564.0px;color:#404652;">0.000</div><div class="cell" style="left:169px;top:564.0px;color:#ffa418;">3.124</div><div class="cell" style="left:255px;top:564.0px;color:#ffa418;">1.366</div><div class="cell" style="left:340px;top:564.0px;color:#008000;">0.487</div><div class="cell" style="left:418px;top:564.0px;color:#404652;">0.5</div><div class="cell" style="left:662px;top:564.0px;color:#4f5b6b;font-weight:bold;letter-spacing:1.4px;"><span style="letter-spacing:0.4px">Sell</span></div><div class="cell" style="left:720px;top:564.0px;color:#404652;">Da</div><div class="cell" style="left:12px;top:598.0px;color:#404652;">-2.250</div><div class="cell" style="left:97px;top:598.0px;color:#404652;">0.000</div><div class="cell" style="left:169px;top:598.0px;color:#ffa418;">2.360</div><div class="cell" style="left:255px;top:598.0px;color:#ffa418;">0.052</div><div class="cell" style="left:340px;top:598.0px;color:#008000;">0.127</div><div class="cell" style="left:418px;top:598.0px;color:#404652;">0.1</div><div class="cell" style="left:662px;top:598.0px;color:#4f5b6b;font-weight:bold;letter-spacing:1.4px;"><span style="letter-spacing:0.4px">Sell</span></div><div class="cell" style="left:720px;top:598.0px;color:#ff1020;font-weight:bold;letter-spacing:1.4px;">Nu</div><div class="cell" style="left:12px;top:633.0px;color:#404652;">-1.725</div><div class="cell" style="left:97px;top:633.0px;color:#404652;">0.000</div><div class="cell" style="left:169px;top:633.0px;color:#ffa418;">1.808</div><div class="cell" style="left:255px;top:633.0px;color:#ffa418;">0.036</div><div class="cell" style="left:340px;top:633.0px;color:#008000;">0.040</div><div class="cell" style="left:418px;top:633.0px;color:#404652;">0.0</div><div class="cell" style="left:662px;top:633.0px;color:#404652;">N/A</div><div class="cell" style="left:12px;top:667.0px;color:#404652;">-0.950</div><div class="cell" style="left:97px;top:667.0px;color:#404652;">0.000</div><div class="cell" style="left:169px;top:667.0px;color:#ffa418;">0.968</div><div class="cell" style="left:255px;top:667.0px;color:#ff1020;">-0.018</div><div class="cell" style="left:340px;top:667.0px;color:#008000;">0.018</div><div class="cell" style="left:418px;top:667.0px;color:#404652;">0.0</div><div class="cell" style="left:662px;top:667.0px;color:#404652;">N/A</div><div class="cell" style="left:12px;top:702.0px;color:#404652;">-0.125</div><div class="cell" style="left:97px;top:702.0px;color:#404652;">0.000</div><div class="cell" style="left:169px;top:702.0px;color:#ffa418;">0.126</div><div class="cell" style="left:255px;top:702.0px;color:#ff1020;">-0.030</div><div class="cell" style="left:340px;top:702.0px;color:#008000;">0.001</div><div class="cell" style="left:418px;top:702.0px;color:#404652;">0.0</div><div class="cell" style="left:662px;top:702.0px;color:#404652;">N/A</div></div>
<div class="a" style="left:498px;top:816px;width:991px;height:2px;background:#f6f6f6;border-top:1px solid #dedede"></div>
<div class="a" style="left:498px;top:103px;width:7px;height:60px;overflow:hidden"><div class="hd" style="left:-6px;top:4.5px;letter-spacing:1.15px">e<br>t</div></div>
</body></html>
